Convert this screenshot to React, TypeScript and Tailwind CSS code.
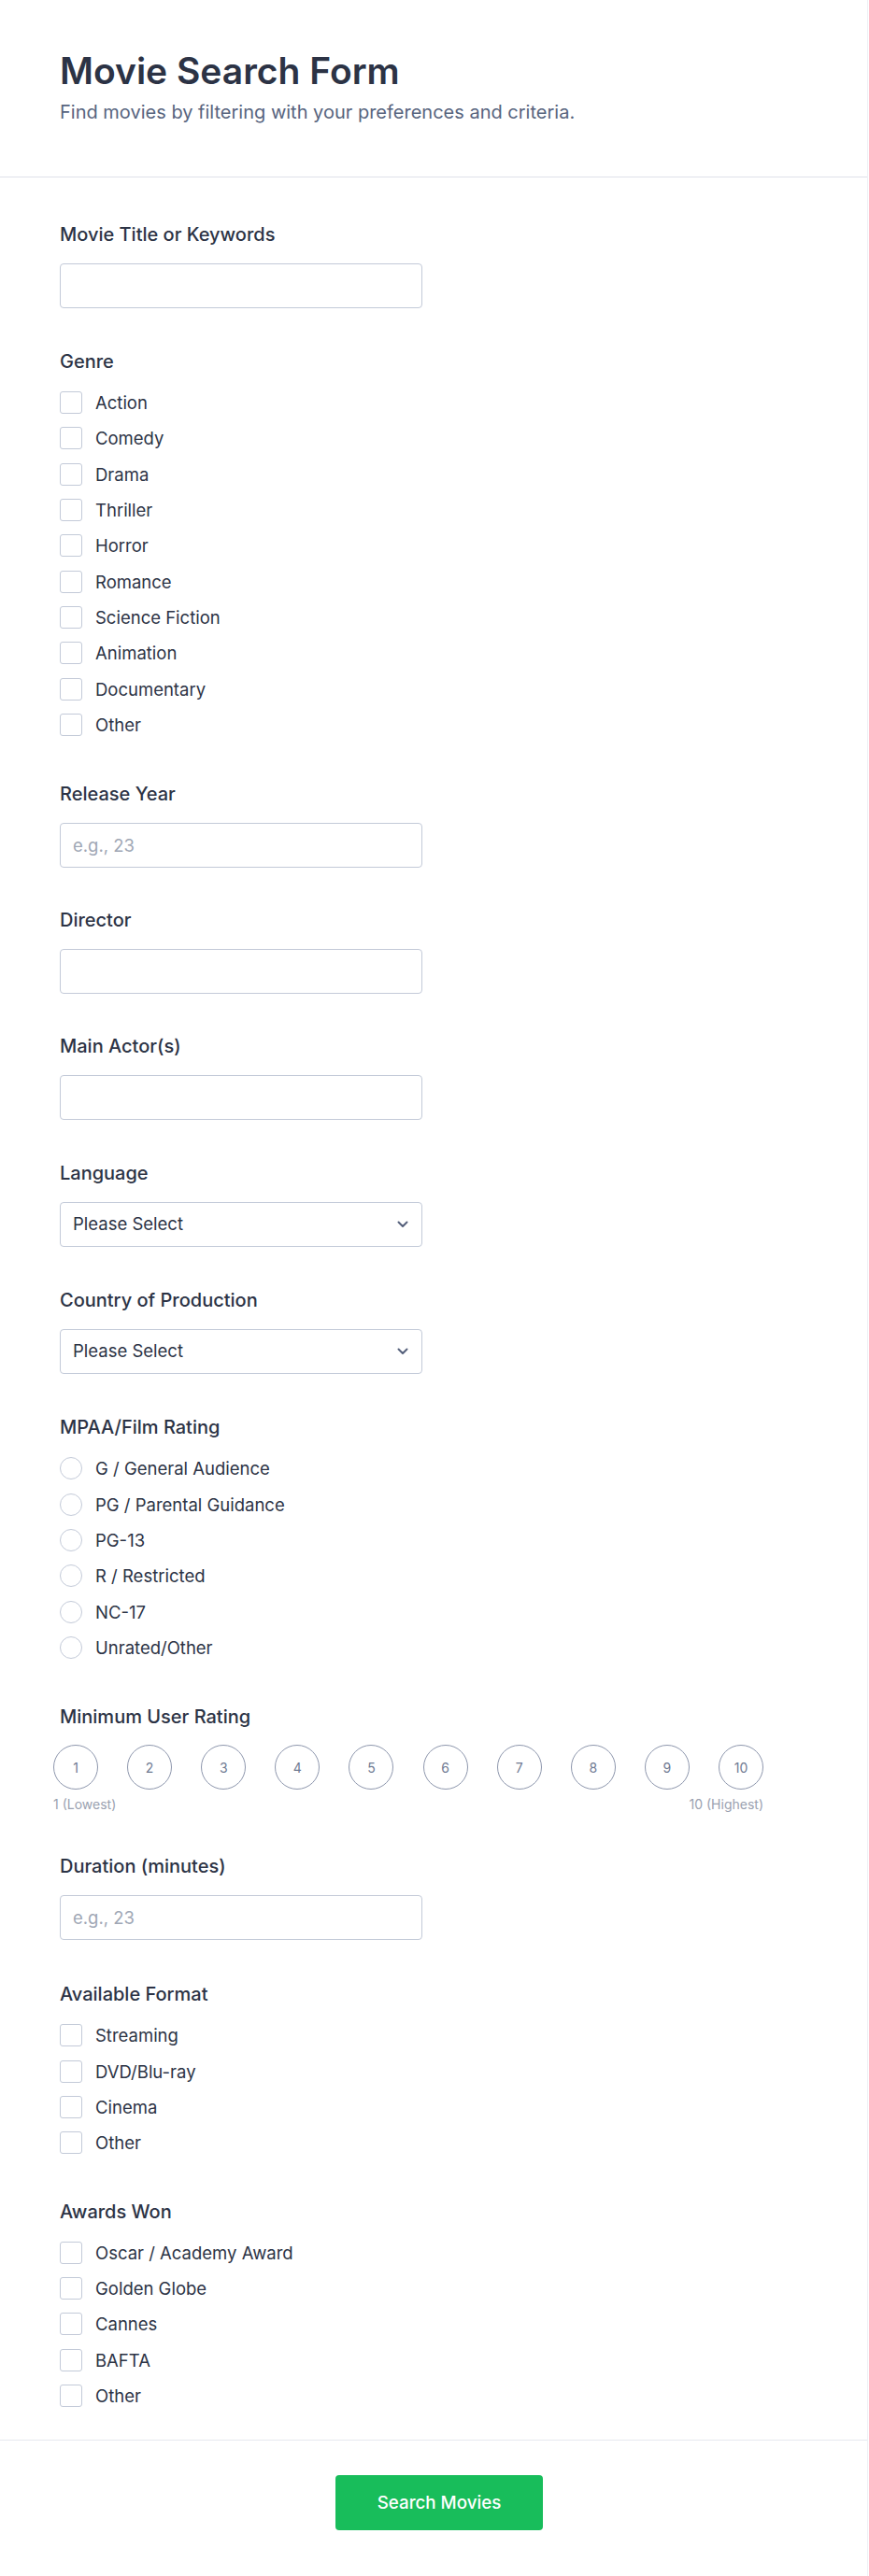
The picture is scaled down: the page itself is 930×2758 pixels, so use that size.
import React from "react";

const GENRES = [
  "Action",
  "Comedy",
  "Drama",
  "Thriller",
  "Horror",
  "Romance",
  "Science Fiction",
  "Animation",
  "Documentary",
  "Other",
];

const RATINGS = [
  "G / General Audience",
  "PG / Parental Guidance",
  "PG-13",
  "R / Restricted",
  "NC-17",
  "Unrated/Other",
];

const FORMATS = ["Streaming", "DVD/Blu-ray", "Cinema", "Other"];

const AWARDS = ["Oscar / Academy Award", "Golden Globe", "Cannes", "BAFTA", "Other"];

// ── Small building blocks ───────────────────────────────────────────────────

function Label({ children }: { children: React.ReactNode }) {
  return (
    <div className="text-[20px] font-medium leading-[30px] text-[#2c3345]">
      {children}
    </div>
  );
}

function TextInput({ placeholder }: { placeholder?: string }) {
  return (
    <input
      type="text"
      placeholder={placeholder}
      className="mt-4 block h-12 w-[388px] rounded-[4px] border border-[#c3cad8] bg-white px-[13px] text-[18.5px] text-[#2c3345] placeholder:text-[#a0a7b5] focus:outline-none"
    />
  );
}

function SelectBox() {
  return (
    <div className="mt-4 flex h-12 w-[388px] items-center justify-between rounded-[4px] border border-[#c3cad8] bg-white pl-[13px] pr-[14px]">
      <span className="text-[18.5px] text-[#2c3345]">Please Select</span>
      <svg width="12" height="8" viewBox="0 0 12 8" fill="none">
        <path
          d="M1.5 1.5l4.5 4.5 4.5-4.5"
          stroke="#56617c"
          strokeWidth="2"
          strokeLinecap="round"
          strokeLinejoin="round"
        />
      </svg>
    </div>
  );
}

function OptionList({ items, round }: { items: string[]; round?: boolean }) {
  return (
    <div className="mt-[10px]">
      {items.map((item) => (
        <label key={item} className="flex h-[38.33px] items-center gap-[14px]">
          <span
            className={`block h-6 w-6 shrink-0 border border-[#c3cad8] bg-white ${
              round ? "rounded-full" : "rounded-[3px]"
            }`}
          />
          <span className="text-[18.5px] leading-6 text-[#2c3345]">{item}</span>
        </label>
      ))}
    </div>
  );
}

// ── Page ────────────────────────────────────────────────────────────────────

export default function App() {
  return (
    <div className="w-[929px] border-r border-b border-[#eef0f5] bg-white font-['Inter','Noto_Sans',sans-serif]">
      {/* Header */}
      <header className="border-b border-[#dfe1ea] px-16 pb-[55px] pt-[52px]">
        <h1 className="text-[39px] font-semibold leading-[48px] text-[#2c3345]">
          Movie Search Form
        </h1>
        <p className="mt-[6px] text-[20px] leading-[28px] text-[#57647e]">
          Find movies by filtering with your preferences and criteria.
        </p>
      </header>

      {/* Fields */}
      <main className="flex flex-col px-16 pb-[28px] pt-[46px]">
        <section>
          <Label>Movie Title or Keywords</Label>
          <TextInput />
        </section>

        <section className="mt-[42px]">
          <Label>Genre</Label>
          <OptionList items={GENRES} />
        </section>

        <section className="mt-[40px]">
          <Label>Release Year</Label>
          <TextInput placeholder="e.g., 23" />
        </section>

        <section className="mt-[41px]">
          <Label>Director</Label>
          <TextInput />
        </section>

        <section className="mt-[41px]">
          <Label>Main Actor(s)</Label>
          <TextInput />
        </section>

        <section className="mt-[42px]">
          <Label>Language</Label>
          <SelectBox />
        </section>

        <section className="mt-[42px]">
          <Label>Country of Production</Label>
          <SelectBox />
        </section>

        <section className="mt-[42px]">
          <Label>MPAA/Film Rating</Label>
          <OptionList items={RATINGS} round />
        </section>

        <section className="mt-[40px]">
          <Label>Minimum User Rating</Label>
          <div className="-ml-[7px] mt-[15px] w-[760px]">
            <div className="flex justify-between">
              {Array.from({ length: 10 }, (_, i) => (
                <span
                  key={i}
                  className="flex h-12 w-12 items-center justify-center rounded-full border border-[#8e97ad] text-[14px] text-[#6f7a92]"
                >
                  {i + 1}
                </span>
              ))}
            </div>
            <div className="mt-[6px] flex justify-between text-[14px] leading-5 text-[#9aa1b0]">
              <span>1 (Lowest)</span>
              <span>10 (Highest)</span>
            </div>
          </div>
        </section>

        <section className="mt-[41px]">
          <Label>Duration (minutes)</Label>
          <TextInput placeholder="e.g., 23" />
        </section>

        <section className="mt-[43px]">
          <Label>Available Format</Label>
          <OptionList items={FORMATS} />
        </section>

        <section className="mt-[39px]">
          <Label>Awards Won</Label>
          <OptionList items={AWARDS} />
        </section>
      </main>

      {/* Submit */}
      <footer className="flex justify-center border-t border-[#e6e8ef] pb-[49px] pt-[37px]">
        <button
          type="button"
          className="ml-[12px] h-[59px] w-[222px] rounded-[4px] bg-[#18bd5b] text-[18.75px] font-medium text-white"
        >
          Search Movies
        </button>
      </footer>
    </div>
  );
}
